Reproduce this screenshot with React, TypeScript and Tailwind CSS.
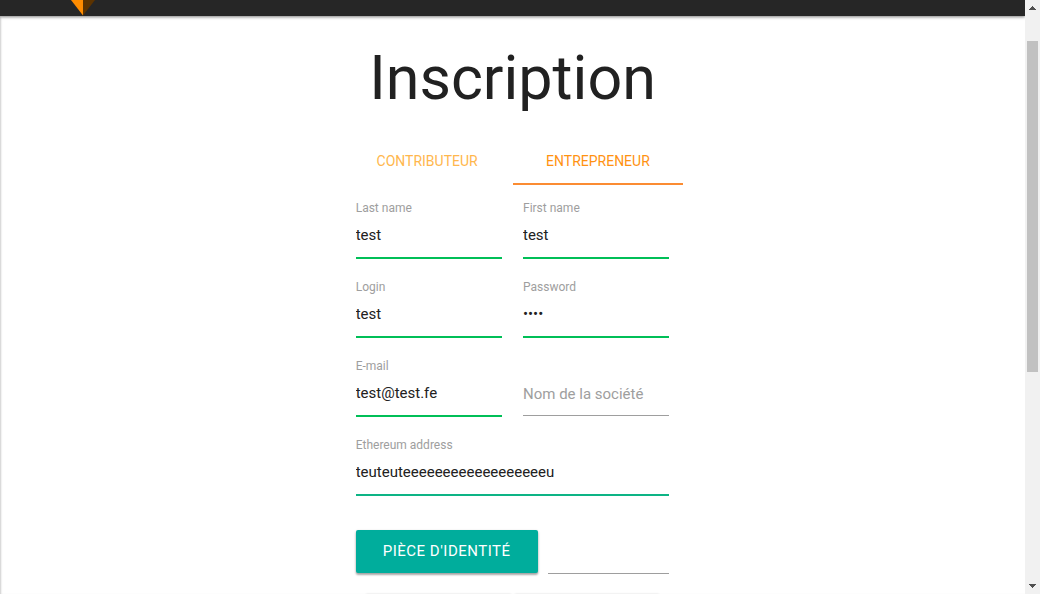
import React, { useState } from "react";

type FieldProps = {
  id: string;
  label: string;
  type?: string;
  value?: string;
  wide?: boolean;
};

function Field({ id, label, type = "text", value = "", wide = false }: FieldProps) {
  const [text, setText] = useState(value);
  const empty = text === "";
  const line = empty
    ? "mt-4 h-[42px] border-b border-[#9e9e9e]"
    : wide
      ? "h-[43px] border-b-2 border-[#0db485]"
      : "h-[43px] border-b-2 border-[#00bf57]";
  return (
    <div className={wide ? "relative col-span-2 h-[59px]" : "relative h-[59px]"}>
      <label
        htmlFor={id}
        className={
          empty
            ? "absolute inset-x-0 top-4 text-[15px] leading-10 text-[#9e9e9e]"
            : "block h-4 text-[12px] leading-4 text-[#9e9e9e]"
        }
      >
        {label}
      </label>
      <input
        id={id}
        type={type}
        value={text}
        onChange={(e) => setText(e.target.value)}
        className={`block w-full rounded-none bg-transparent p-0 pb-1 text-[15px] text-[#212121] outline-none ${line}`}
      />
    </div>
  );
}

function ScrollBar() {
  return (
    <div aria-hidden="true" className="flex w-[15px] shrink-0 flex-col items-center bg-[#f1f1f1]">
      <svg viewBox="0 0 15 15" className="h-[15px] w-[15px]" shapeRendering="crispEdges">
        <path d="M4 10h7v-1h-1v-1h-1v-1h-1v-1h-1v1h-1v1h-1v1h-1z" fill="#505050" />
      </svg>
      <div className="flex w-full grow flex-col items-center pt-[26px]">
        <div className="h-8/13 w-[11px] bg-[#c1c1c1]" />
      </div>
      <svg viewBox="0 0 15 15" className="h-[15px] w-[15px]" shapeRendering="crispEdges">
        <path d="M4 5h7v1h-1v1h-1v1h-1v1h-1v-1h-1v-1h-1v-1h-1z" fill="#505050" />
      </svg>
    </div>
  );
}

export default function App() {
  return (
    <div className="flex h-screen overflow-hidden bg-white font-['Roboto',sans-serif] text-[#212121]">
      <div className="min-w-0 grow overflow-hidden shadow-[inset_2px_0_2px_-1px_rgba(0,0,0,0.2)]">
        <header className="h-4 bg-[#262626] pl-[71px] shadow-[0_1px_3px_rgba(0,0,0,0.5)]">
          <svg viewBox="0 0 24 16" className="h-4 w-6" role="img" aria-label="Logo">
            <path d="M0 0H12V15.500Z" fill="#ff8c00" />
            <path d="M12 0H24L12 15.500Z" fill="#5c3300" />
          </svg>
        </header>
        <main className="mx-auto w-1/3">
          <h1 className="pt-[29px] text-center text-[61px] leading-[67px]">Inscription</h1>
          <nav className="mt-[25px] grid grid-cols-2 text-center text-[14px] leading-[46px]">
            <a href="#contributeur" className="h-12 border-b-2 border-transparent pt-px text-[#ffb74d]">
              CONTRIBUTEUR
            </a>
            <a href="#entrepreneur" className="h-12 border-b-2 border-[#fb8c32] pt-px text-[#ff9212]">
              ENTREPRENEUR
            </a>
          </nav>
          <form className="px-3.5 pt-[15px]" onSubmit={(e) => e.preventDefault()}>
            <div className="grid grid-cols-2 gap-x-[21px] gap-y-5">
              <Field id="last-name" label="Last name" value="test" />
              <Field id="first-name" label="First name" value="test" />
              <Field id="login" label="Login" value="test" />
              <Field id="password" label="Password" type="password" value="test" />
              <Field id="email" label="E-mail" type="email" value="test@test.fe" />
              <Field id="company" label="Nom de la société" />
              <Field id="ethereum" label="Ethereum address" value={"teuteut" + "e".repeat(18) + "u"} wide />
            </div>
            <div className="mt-[34px] flex gap-2.5">
              <button
                type="button"
                className="h-[43px] w-[182px] shrink-0 rounded-[2px] bg-[#00ad9c] text-[15px] tracking-[0.5px] text-white shadow-[0_2px_2px_rgba(0,0,0,0.25),0_1px_3px_rgba(0,0,0,0.2)]"
              >
                PIÈCE D'IDENTITÉ
              </button>
              <input
                type="text"
                aria-label="Fichier"
                className="h-11 w-full min-w-0 border-b border-[#9e9e9e] bg-transparent text-[15px] outline-none"
              />
            </div>
            <div className="mt-5 flex gap-1 px-2.5">
              <div className="h-10 grow bg-white shadow-[0_0_2px_rgba(0,0,0,0.12)]" />
              <div className="h-10 grow bg-white shadow-[0_0_2px_rgba(0,0,0,0.12)]" />
            </div>
          </form>
        </main>
      </div>
      <ScrollBar />
    </div>
  );
}
